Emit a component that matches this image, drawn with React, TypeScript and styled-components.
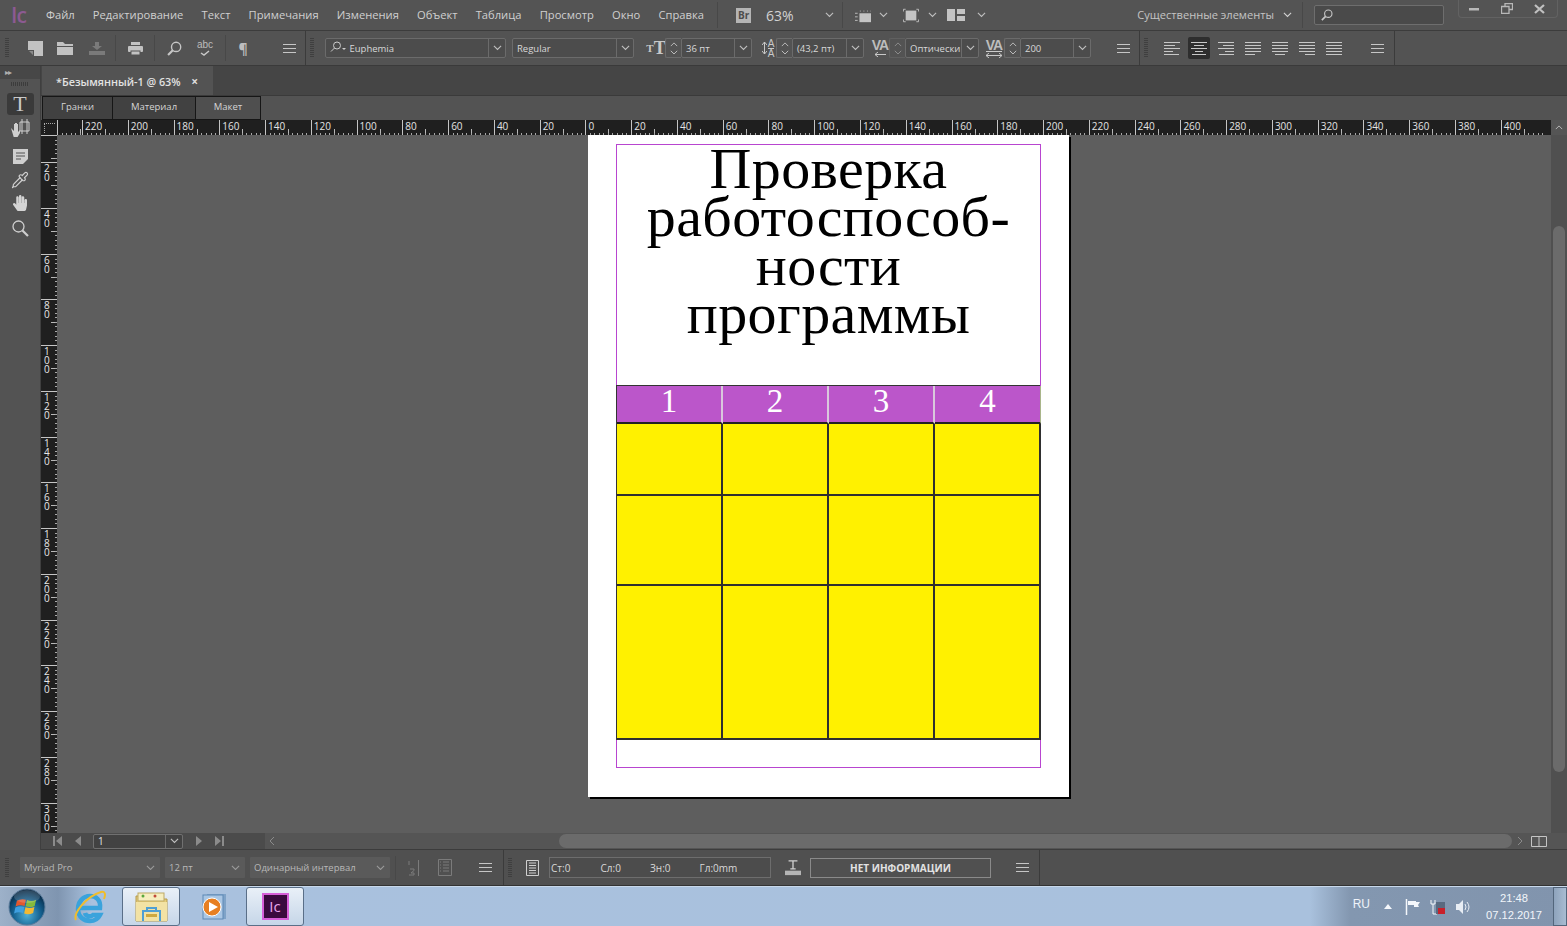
import React from "react";
import styled, { createGlobalStyle } from "styled-components";
import { FaHandPaper } from "react-icons/fa";
import { Pipette } from "lucide-react";

const UI_FONT = `"Open Sans", "Noto Sans", "Liberation Sans", sans-serif`;

const GlobalStyle = createGlobalStyle`
  html, body { margin: 0; padding: 0; background: #535353; }
  #root { width: 1567px; height: 926px; overflow: hidden; }
  * { box-sizing: border-box; }
`;

const Screen = styled.div`
  width: 1567px;
  height: 926px;
  display: flex;
  flex-direction: column;
  font-family: ${UI_FONT};
  color: #d2d2d2;
  background: #535353;
  overflow: hidden;
`;

/* ---------- menu bar ---------- */
const MenuBar = styled.div`
  height: 31px;
  display: flex;
  align-items: center;
  background: #545454;
  border-bottom: 1px solid #3c3c3c;
  flex-shrink: 0;
`;
const AppMark = styled.span`
  width: 46px;
  padding-left: 11px;
  color: #8c5a92;
  font-size: 21px;
  font-weight: 600;
  letter-spacing: -1px;
`;
const MenuItem = styled.span`
  font-size: 11.2px;
  margin: 0 18.2px 2px 0;
  white-space: nowrap;
  color: #d0d0d0;
`;
const VRule = styled.span<{ $ml?: number; $h?: number }>`
  width: 1px;
  height: ${(p) => p.$h ?? 26}px;
  background: #484848;
  margin-left: ${(p) => p.$ml ?? 0}px;
  flex-shrink: 0;
`;
const BrBadge = styled.span`
  width: 15px;
  height: 15px;
  margin-left: 18px;
  background: #b5b5b5;
  color: #4d4d4d;
  font-size: 10px;
  font-weight: 700;
  text-align: center;
  line-height: 15px;
`;
const ZoomText = styled.span`
  width: 59px;
  margin-left: 15px;
  font-size: 14px;
`;
const ChevBox = styled.span<{ $ml?: number }>`
  display: inline-flex;
  margin-left: ${(p) => p.$ml ?? 0}px;
  flex-shrink: 0;
`;
const Workspace = styled.span`
  margin: 0 0 2px auto;
  font-size: 11.1px;
  color: #c4c4c4;
  white-space: nowrap;
`;
const SearchBox = styled.div`
  width: 130px;
  height: 20px;
  margin-left: 11px;
  border: 1px solid #6e6e6e;
  border-radius: 2px;
  background: #4a4a4a;
  display: flex;
  align-items: center;
  padding-left: 6px;
`;
const WindowButtons = styled.div`
  width: 100px;
  height: 18px;
  margin: 0 9px 12px 14px;
  border: 1px solid #626262;
  border-top: 0;
  border-radius: 0 0 4px 4px;
  display: flex;
  align-items: center;
  justify-content: space-between;
  padding: 0 12px 0 10px;
`;

/* ---------- control bar ---------- */
const ControlBar = styled.div`
  height: 35px;
  display: flex;
  align-items: center;
  background: #535353;
  border-bottom: 1px solid #3a3a3a;
  flex-shrink: 0;
`;
const Grip = styled.span<{ $ml?: number; $h?: number }>`
  width: 4px;
  height: ${(p) => p.$h ?? 20}px;
  margin-left: ${(p) => p.$ml ?? 0}px;
  flex-shrink: 0;
  background: repeating-linear-gradient(180deg, #3f3f3f 0 1px, transparent 1px 2px);
`;
const Tool = styled.span<{ $ml?: number; $w?: number }>`
  width: ${(p) => p.$w ?? 16}px;
  height: 20px;
  margin-left: ${(p) => p.$ml ?? 0}px;
  display: inline-flex;
  align-items: center;
  justify-content: center;
  flex-shrink: 0;
`;
const PanelEdge = styled.span<{ $ml?: number }>`
  width: 1px;
  align-self: stretch;
  margin-left: ${(p) => p.$ml ?? 0}px;
  background: #3b3b3b;
  flex-shrink: 0;
`;
const Field = styled.div<{ $w: number; $ml?: number }>`
  width: ${(p) => p.$w}px;
  height: 20px;
  margin-left: ${(p) => p.$ml ?? 0}px;
  display: flex;
  align-items: center;
  border: 1px solid #6b6b6b;
  border-radius: 2px;
  background: #4c4c4c;
  font-size: 9.5px;
  color: #d8d8d8;
  flex-shrink: 0;
  white-space: nowrap;
  overflow: hidden;
`;
const FieldText = styled.span`
  flex: 1;
  padding-left: 4px;
  overflow: hidden;
`;
const FieldDrop = styled.span`
  width: 17px;
  height: 100%;
  border-left: 1px solid #6b6b6b;
  display: flex;
  align-items: center;
  justify-content: center;
  flex-shrink: 0;
`;
const Spinner = styled.div<{ $dim?: boolean }>`
  width: 16px;
  height: 20px;
  display: flex;
  flex-direction: column;
  align-items: center;
  justify-content: center;
  gap: 3px;
  flex-shrink: 0;
  border: 1px solid #6b6b6b;
  border-right: 0;
  border-radius: 2px 0 0 2px;
  opacity: ${(p) => (p.$dim ? 0.55 : 1)};
`;
const GlyphSerif = styled.span<{ $size: number; $weight?: number }>`
  font-family: "Liberation Serif", serif;
  font-size: ${(p) => p.$size}px;
  font-weight: ${(p) => p.$weight ?? 700};
  line-height: 1;
  color: #c8c8c8;
`;
const LeadingGlyph = styled.span`
  display: flex;
  align-items: center;
  gap: 1px;
`;
const StackGlyph = styled.span`
  display: flex;
  flex-direction: column;
  align-items: center;
  font-family: "Liberation Sans", sans-serif;
  font-size: 10px;
  line-height: 9px;
  color: #c8c8c8;
  span + span { border-top: 1px solid #c8c8c8; }
`;
const VaStack = styled.span`
  display: flex;
  flex-direction: column;
  align-items: center;
  gap: 1px;
`;
const VaGlyph = styled.span<{ $line?: boolean }>`
  font-family: "Liberation Sans", sans-serif;
  font-size: 14px;
  font-weight: 700;
  letter-spacing: -1px;
  line-height: 12px;
  color: #bdbdbd;
  border-bottom: ${(p) => (p.$line ? "1px solid #ccc" : "0")};
`;
const AlignBtn = styled.span<{ $active?: boolean; $ml?: number }>`
  width: 22px;
  height: 22px;
  margin-left: ${(p) => p.$ml ?? 0}px;
  border-radius: 2px;
  background: ${(p) => (p.$active ? "#2e2e2e" : "transparent")};
  display: flex;
  align-items: center;
  justify-content: center;
  flex-shrink: 0;
`;
const AbcText = styled.span`
  font-size: 10px;
  line-height: 10px;
  color: #bcbcbc;
  font-family: "Liberation Sans", sans-serif;
`;
const AbcStack = styled.span`
  display: flex;
  flex-direction: column;
  align-items: center;
`;
const Pilcrow = styled.span`
  font-size: 14px;
  font-weight: 700;
  color: #bdbdbd;
`;

/* ---------- document window ---------- */
const Body = styled.div`
  height: 784px;
  display: flex;
  flex-shrink: 0;
`;
const ToolPanel = styled.div`
  width: 41px;
  display: flex;
  flex-direction: column;
  align-items: center;
  background: #535353;
  border-right: 1px solid #3f3f3f;
  flex-shrink: 0;
`;
const PanelHead = styled.div`
  width: 100%;
  height: 13px;
  background: #474747;
  color: #b0b0b0;
  font-size: 8px;
  line-height: 12px;
  padding-left: 5px;
  letter-spacing: -1px;
`;
const PanelGrip = styled.div`
  width: 18px;
  height: 4px;
  margin-top: 3px;
  background: repeating-linear-gradient(90deg, #3c3c3c 0 1px, transparent 1px 2px);
`;
const ToolButton = styled.div<{ $active?: boolean; $mt?: number }>`
  width: 27px;
  height: 22px;
  margin-top: ${(p) => p.$mt ?? 0}px;
  border-radius: 3px;
  background: ${(p) => (p.$active ? "#3a3a3a" : "transparent")};
  display: flex;
  align-items: center;
  justify-content: center;
  color: #d4d4d4;
`;
const Main = styled.div`
  flex: 1;
  min-width: 0;
  display: flex;
  flex-direction: column;
`;
const TabBar = styled.div`
  height: 30px;
  background: #454545;
  border-bottom: 1px solid #3a3a3a;
  display: flex;
  align-items: flex-end;
  padding-left: 1px;
  flex-shrink: 0;
`;
const DocTab = styled.div`
  width: 171px;
  height: 29px;
  background: #535353;
  display: flex;
  align-items: center;
  justify-content: space-between;
  padding: 2px 15px 0 14px;
  font-size: 10.8px;
  font-weight: 600;
  color: #e2e2e2;
`;
const CloseX = styled.span`
  font-size: 12px;
  font-weight: 700;
  color: #ddd;
`;
const ViewBar = styled.div`
  height: 24px;
  background: #535353;
  display: flex;
  align-items: center;
  padding-left: 1px;
  flex-shrink: 0;
`;
const ViewTab = styled.div<{ $w: number; $light?: boolean }>`
  width: ${(p) => p.$w}px;
  height: 24px;
  background: ${(p) => (p.$light ? "#4f4f4f" : "#414141")};
  border: 1px solid #161616;
  margin-right: -1px;
  padding-bottom: 3px;
  display: flex;
  align-items: center;
  justify-content: center;
  font-size: 9.5px;
  color: #d4d4d4;
`;
const RulerRow = styled.div`
  height: 15px;
  display: flex;
  flex-shrink: 0;
`;
const RulerCorner = styled.div`
  width: 16px;
  background: #1f1f1f;
  flex-shrink: 0;
  padding: 3px 0 0 3px;
`;
const CornerDots = styled.div`
  width: 11px;
  height: 10px;
  border-top: 1px dotted #aaa;
  border-left: 1px dotted #aaa;
`;
const HRuler = styled.div`
  flex: 1;
  min-width: 0;
  display: flex;
  overflow: hidden;
  background: #1f1f1f;
`;
const RulerCell = styled.div<{ $w?: number }>`
  width: ${(p) => p.$w ?? 45.78}px;
  height: 15px;
  flex-shrink: 0;
  border-left: 1px solid #c4c4c4;
  padding-left: 2px;
  font-size: 10px;
  line-height: 12px;
  color: #e4e4e4;
  background:
    repeating-linear-gradient(90deg, transparent 0 3.575px, #a8a8a8 3.575px 4.575px) left bottom / 100% 2px no-repeat,
    linear-gradient(#b8b8b8, #b8b8b8) 22px bottom / 1px 6px no-repeat;
`;
const ScrollCap = styled.div`
  width: 16px;
  background: #555;
  display: flex;
  align-items: center;
  justify-content: center;
  flex-shrink: 0;
`;
const WorkArea = styled.div`
  flex: 1;
  min-height: 0;
  display: flex;
`;
const VRuler = styled.div`
  width: 16px;
  display: flex;
  flex-direction: column;
  overflow: hidden;
  background: #1f1f1f;
  flex-shrink: 0;
`;
const VRulerCell = styled.div<{ $h?: number }>`
  height: ${(p) => p.$h ?? 45.75}px;
  flex-shrink: 0;
  border-top: 1px solid #c4c4c4;
  padding: 1px 0 0 3px;
  font-size: 10px;
  line-height: 9px;
  color: #e8e8e8;
  background:
    repeating-linear-gradient(180deg, transparent 0 3.575px, #a8a8a8 3.575px 4.575px) right top / 2px 100% no-repeat,
    linear-gradient(#b8b8b8, #b8b8b8) right 22px / 6px 1px no-repeat;
`;
const VDigits = styled.span`
  display: block;
  width: 7px;
  word-break: break-all;
`;
const Canvas = styled.div`
  flex: 1;
  min-width: 0;
  background: #5e5e5e;
  padding-left: 531px;
  overflow: hidden;
`;
const VScroll = styled.div`
  width: 16px;
  background: #505050;
  display: flex;
  flex-direction: column;
  align-items: center;
  padding-top: 91px;
  flex-shrink: 0;
`;
const VThumb = styled.div`
  width: 12px;
  height: 546px;
  border-radius: 6px;
  background: #6b6b6b;
`;
const VScrollEnd = styled.div`
  margin-top: auto;
  height: 12px;
`;

/* ---------- page ---------- */
const Page = styled.div`
  width: 481px;
  height: 662px;
  background: #fff;
  padding: 9px 0 0 28px;
  box-shadow: 2px 2px 0 #000;
`;
const MarginBox = styled.div`
  width: 425px;
  height: 624px;
  border: 1px solid #b845d0;
`;
const Title = styled.h1`
  margin: 0;
  height: 240px;
  font-family: "Liberation Serif", serif;
  font-weight: 400;
  font-size: 58px;
  line-height: 48.3px;
  letter-spacing: 0.4px;
  text-align: center;
  color: #000;
`;
const TableGrid = styled.div`
  width: 424px;
  margin-left: -1px;
  border-top: 1px solid #333;
  border-left: 1px solid #333;
`;
const TableRow = styled.div<{ $h: number }>`
  height: ${(p) => p.$h}px;
  display: grid;
  grid-template-columns: repeat(4, 106px);
`;
const HeadCell = styled.div`
  background: #bb56ca;
  color: #fff;
  font-family: "Liberation Serif", serif;
  font-size: 33px;
  line-height: 30px;
  text-align: center;
  border-right: 2px solid #d9c8dc;
  border-bottom: 2px solid #222;
  &:last-child { border-right: 1px solid #a9b58a; }
`;
const BodyCell = styled.div`
  background: #fff100;
  border-right: 2px solid #2f2f2f;
  border-bottom: 2px solid #2f2f2f;
`;

/* ---------- navigation row under the page ---------- */
const NavRow = styled.div`
  height: 17px;
  display: flex;
  align-items: center;
  background: #555;
  border-bottom: 1px solid #3c3c3c;
  flex-shrink: 0;
`;
const NavGroup = styled.div`
  width: 224px;
  height: 100%;
  background: #4b4b4b;
  display: flex;
  align-items: center;
  padding-left: 12px;
  flex-shrink: 0;
`;
const PageField = styled.div`
  width: 90px;
  height: 15px;
  margin-left: 12px;
  display: flex;
  align-items: center;
  border: 1px solid #707070;
  border-radius: 2px;
  background: #424242;
  font-size: 10px;
  color: #e0e0e0;
`;
const NavGlyph = styled.span<{ $ml?: number }>`
  margin-left: ${(p) => p.$ml ?? 0}px;
  display: inline-flex;
`;
const HTrack = styled.div`
  flex: 1;
  height: 100%;
  display: flex;
  align-items: center;
  padding-left: 4px;
  min-width: 0;
`;
const HThumb = styled.div`
  width: 953px;
  height: 14px;
  margin-left: 284px;
  border-radius: 7px;
  background: #6b6b6b;
  flex-shrink: 0;
`;

/* ---------- status bar ---------- */
const StatusBar = styled.div`
  height: 36px;
  display: flex;
  align-items: center;
  background: #505050;
  border-bottom: 1px solid #333;
  flex-shrink: 0;
`;
const StatusSelect = styled.div<{ $w: number; $ml: number }>`
  width: ${(p) => p.$w}px;
  height: 21px;
  margin-left: ${(p) => p.$ml}px;
  padding: 0 5px 0 4px;
  display: flex;
  align-items: center;
  justify-content: space-between;
  background: #5a5a5a;
  font-size: 9.5px;
  color: #b8b8b8;
  border-radius: 1px;
  flex-shrink: 0;
`;
const CountBox = styled.div`
  width: 222px;
  height: 21px;
  margin-left: 9px;
  border: 1px solid #6d6d6d;
  background: #4c4c4c;
  display: flex;
  align-items: center;
  padding-left: 1px;
  font-size: 10px;
  color: #d8d8d8;
  flex-shrink: 0;
`;
const CountItem = styled.span`
  width: 49.5px;
`;
const InfoBox = styled.div`
  width: 181px;
  height: 20px;
  margin-left: 9px;
  border: 1px solid #8a8a8a;
  display: flex;
  align-items: center;
  justify-content: center;
  font-size: 10px;
  font-weight: 700;
  color: #e2e2e2;
  flex-shrink: 0;
`;

/* ---------- windows taskbar ---------- */
const Taskbar = styled.div`
  height: 40px;
  display: flex;
  align-items: center;
  border-top: 1px solid #c8d8ea;
  background: linear-gradient(90deg, #9db1c9 0, #7f95b0 58px, #a9c1de 92px, #a9c1dd 1310px, #8397b0 1350px, #8194ad 100%);
  flex-shrink: 0;
`;
const TaskSlot = styled.div<{ $active?: boolean; $ml: number; $w?: number }>`
  width: ${(p) => p.$w ?? 58}px;
  height: 39px;
  margin-left: ${(p) => p.$ml}px;
  display: flex;
  align-items: center;
  justify-content: center;
  flex-shrink: 0;
  border-radius: 3px;
  border: ${(p) => (p.$active ? "1px solid #5a6f88" : "0")};
  background: ${(p) =>
    p.$active ? "linear-gradient(180deg, #e9f0f8, #c6d6e8)" : "transparent"};
`;
const IcTile = styled.div`
  width: 27px;
  height: 27px;
  background: #3a0a3e;
  border: 2px solid #d65fd8;
  color: #e9a6ec;
  font-size: 15px;
  line-height: 22px;
  text-align: center;
`;
const Tray = styled.div`
  margin-left: auto;
  display: flex;
  align-items: center;
  height: 100%;
`;
const TrayLang = styled.span`
  font-family: "Liberation Sans", sans-serif;
  font-size: 12px;
  color: #eef3f9;
  margin-bottom: 5px;
`;
const TrayIcon = styled.span<{ $ml: number }>`
  margin-left: ${(p) => p.$ml}px;
  display: inline-flex;
`;
const Clock = styled.div`
  width: 64px;
  margin-left: 11px;
  font-family: "Liberation Sans", sans-serif;
  font-size: 11.2px;
  line-height: 17px;
  text-align: center;
  color: #f2f5fa;
`;
const ShowDesktop = styled.div`
  width: 14px;
  height: 100%;
  margin-left: 7px;
  border: 1px solid #53667c;
  background: linear-gradient(90deg, #8ea3bc, #a9bcd2);
`;

/* ---------- small drawings ---------- */
function Chev({ color = "#c0c0c0", size = 9 }: { color?: string; size?: number }) {
  return (
    <svg width={size} height={size * 0.6} viewBox="0 0 10 6">
      <path d="M1 1l4 4 4-4" fill="none" stroke={color} strokeWidth="1.2" />
    </svg>
  );
}
function Up() {
  return (
    <svg width="8" height="5" viewBox="0 0 10 6">
      <path d="M1 5l4-4 4 4" fill="none" stroke="#bbb" strokeWidth="1.2" />
    </svg>
  );
}
function Lines({ w = 13 }: { w?: number }) {
  return (
    <svg width={w} height="9" viewBox="0 0 13 9">
      <path d="M0 .5h13M0 4.5h13M0 8.5h13" stroke="#c6c6c6" />
    </svg>
  );
}
function Lens({ size = 14, color = "#c6c6c6" }: { size?: number; color?: string }) {
  return (
    <svg width={size} height={size} viewBox="0 0 14 14">
      <circle cx="8.5" cy="5.5" r="4.3" fill="none" stroke={color} strokeWidth="1.3" />
      <path d="M5.4 8.6L1 13" stroke={color} strokeWidth="2" />
    </svg>
  );
}
function ZoomGlass() {
  return (
    <svg width="17" height="17" viewBox="0 0 17 17">
      <circle cx="6.500" cy="6.500" r="5.500" fill="none" stroke="#cfcfcf" strokeWidth="1.300" />
      <path d="M10.500 10.500L16 16" stroke="#cfcfcf" strokeWidth="2.200" />
    </svg>
  );
}
function AlignIcon({ rows }: { rows: [number, number][] }) {
  return (
    <svg width="16" height="15" viewBox="0 0 16 15">
      {rows.map(([x, w], i) => (
        <rect key={i} x={x} y={i * 3 + 1} width={w} height="1" fill="#c8c8c8" />
      ))}
    </svg>
  );
}
const ALIGNS: [number, number][][] = [
  [[0, 16], [0, 11], [0, 16], [0, 9], [0, 15]],
  [[0, 16], [3, 10], [0, 16], [4, 8], [1, 14]],
  [[0, 16], [5, 11], [0, 16], [7, 9], [1, 15]],
  [[0, 16], [0, 16], [0, 16], [0, 16], [0, 10]],
  [[0, 16], [0, 16], [0, 16], [0, 16], [3, 10]],
  [[0, 16], [0, 16], [0, 16], [0, 16], [6, 10]],
  [[0, 16], [0, 16], [0, 16], [0, 16], [0, 16]],
];

function Orb() {
  return (
    <svg width="38" height="38" viewBox="0 0 38 38">
      <defs>
        <radialGradient id="orbFill" cx="50%" cy="72%" r="70%">
          <stop offset="0" stopColor="#4fb0d8" />
          <stop offset="0.55" stopColor="#14608f" />
          <stop offset="1" stopColor="#06223c" />
        </radialGradient>
      </defs>
      <circle cx="19" cy="19" r="18" fill="url(#orbFill)" stroke="#5b7c9c" />
      <g transform="translate(-5.200 -4.500) scale(1.280)">
        <path d="M11 13.500q3.500-2 7-.8l-1 4.800q-3.500-1.300-7 .4z" fill="#e2572e" />
        <path d="M19 12.900q3.500 1.500 7-.3l-1.100 4.900q-3.500 1.700-7 .3z" fill="#84b93c" />
        <path d="M9.800 18.700q3.500-1.700 7-.4l-1 4.800q-3.500-1.400-7 .3z" fill="#3f9fe0" />
        <path d="M17.700 18.600q3.500 1.300 7-.3l-1 4.800q-3.500 1.800-7 .4z" fill="#f3b933" />
      </g>
      <ellipse cx="19" cy="8.500" rx="13" ry="6.500" fill="#fff" opacity="0.16" />
    </svg>
  );
}
function IeLogo() {
  return (
    <svg width="34" height="36" viewBox="0 0 34 36">
      <path d="M6 19h21c1-8-4-12-10-12C10 7 5 13 5 20c0 8 6 12 12 12 5 0 8-2 10-6h-7c-2 2-7 2-8-2"
        fill="none" stroke="#3aa3dc" strokeWidth="4.500" />
      <path d="M3 31C0 25 12 8 28 3c4-1 5 2 3 7" fill="none" stroke="#f0bd2c" strokeWidth="2" />
    </svg>
  );
}
function FolderLogo() {
  return (
    <svg width="33" height="32" viewBox="0 0 33 32">
      <path d="M1 5h12l2 3h17v22H1z" fill="#e6cd79" stroke="#b49a4c" />
      <rect x="3" y="2" width="26" height="8" fill="#f6eebf" stroke="#bda966" />
      <circle cx="8" cy="5" r="1.500" fill="#5aa83e" />
      <circle cx="20" cy="5" r="1.500" fill="#c24a3a" />
      <rect x="1" y="11" width="31" height="19" fill="#f2e2a4" />
      <path d="M8 30V20h17v10M12 20v-3h9v3" fill="none" stroke="#4f9fd4" strokeWidth="2" />
      <rect x="11" y="23" width="11" height="3" fill="#cfa83f" />
    </svg>
  );
}
function PlayerLogo() {
  return (
    <svg width="30" height="30" viewBox="0 0 30 30">
      <rect x="9" y="2" width="19" height="25" fill="#7fa3c8" />
      <rect x="5" y="3" width="20" height="24" fill="#a9c6e4" stroke="#5e89b5" />
      <circle cx="14" cy="15" r="9" fill="#e77f22" stroke="#fff" />
      <path d="M11 10l9 5-9 5z" fill="#fff" />
    </svg>
  );
}

const H_LABELS = [
  220, 200, 180, 160, 140, 120, 100, 80, 60, 40, 20, 0, 20, 40, 60, 80, 100, 120, 140, 160, 180, 200,
  220, 240, 260, 280, 300, 320, 340, 360, 380, 400,
];
const V_LABELS = [20, 40, 60, 80, 100, 120, 140, 160, 180, 200, 220, 240, 260, 280, 300];
const MENU = ["Файл", "Редактирование", "Текст", "Примечания", "Изменения", "Объект", "Таблица", "Просмотр", "Окно", "Справка"];

export default function App() {
  return (
    <Screen>
      <GlobalStyle />
      <MenuBar>
        <AppMark>Ic</AppMark>
        {MENU.map((m) => (
          <MenuItem key={m}>{m}</MenuItem>
        ))}
        <VRule $ml={-5} />
        <BrBadge>Br</BrBadge>
        <ZoomText>63%</ZoomText>
        <Chev />
        <VRule $ml={8} />
        <Tool $ml={12} $w={16}>
          <svg width="18" height="15" viewBox="0 0 18 15">
            <rect x="5" y="5" width="13" height="10" fill="#c4c4c4" />
            <path d="M0 5h3M0 9h3M0 13h3M6 2v1M10 2v1M14 2v1M18 2v1" stroke="#c4c4c4" />
          </svg>
        </Tool>
        <ChevBox $ml={8}><Chev /></ChevBox>
        <Tool $ml={15}>
          <svg width="18" height="15" viewBox="0 0 18 15">
            <rect x="3" y="2" width="12" height="11" fill="#c4c4c4" />
            <path d="M3 .5H.5V3M15 .5h2.500V3M3 14.500H.5V12M15 14.500h2.500V12" fill="none" stroke="#c4c4c4" />
          </svg>
        </Tool>
        <ChevBox $ml={9}><Chev /></ChevBox>
        <Tool $ml={10} $w={18}>
          <svg width="18" height="12" viewBox="0 0 18 12">
            <rect x="0" y="0" width="8" height="12" fill="#c4c4c4" />
            <rect x="10" y="0" width="8" height="5" fill="#c4c4c4" />
            <rect x="10" y="7" width="8" height="5" fill="#c4c4c4" />
          </svg>
        </Tool>
        <ChevBox $ml={12}><Chev /></ChevBox>
        <Workspace>Существенные элементы</Workspace>
        <ChevBox $ml={9}><Chev color="#d4d4d4" /></ChevBox>
        <VRule $ml={10} />
        <SearchBox>
          <Lens size={12} />
        </SearchBox>
        <WindowButtons>
          <svg width="10" height="4" viewBox="0 0 10 4"><rect y="1" width="10" height="2.500" fill="#b8b8b8" /></svg>
          <svg width="12" height="11" viewBox="0 0 12 11">
            <path d="M4 3V.5h7.500v6H8M.5 3.500h7.500v7H.5z" fill="none" stroke="#b8b8b8" strokeWidth="1.300" />
          </svg>
          <svg width="11" height="10" viewBox="0 0 11 10"><path d="M1 1l9 8M10 1l-9 8" stroke="#c0c0c0" strokeWidth="2.200" /></svg>
        </WindowButtons>
      </MenuBar>

      <ControlBar>
        <Grip $ml={5} />
        <Tool $ml={18}>
          <svg width="15" height="15" viewBox="0 0 15 15"><path d="M0 0h15v15H6V9H0z" fill="#c2c2c2" /><path d="M1 10h4v4z" fill="#8a8a8a" /></svg>
        </Tool>
        <Tool $ml={14}>
          <svg width="16" height="13" viewBox="0 0 16 13"><path d="M0 0h6l2 2h8v2H0z" fill="#c2c2c2" /><rect y="5" width="16" height="8" fill="#c2c2c2" /></svg>
        </Tool>
        <Tool $ml={16}>
          <svg width="16" height="13" viewBox="0 0 16 13"><path d="M6 0h4v4h3L8 8 3 4h3z" fill="#7a7a7a" /><rect y="9" width="16" height="4" fill="#7a7a7a" /></svg>
        </Tool>
        <VRule $ml={10} />
        <Tool $ml={11}>
          <svg width="15" height="13" viewBox="0 0 15 13"><rect x="3" width="9" height="3" fill="#c2c2c2" /><rect y="4" width="15" height="6" rx="1" fill="#c2c2c2" /><rect x="3" y="9" width="9" height="4" fill="#c2c2c2" stroke="#535353" /></svg>
        </Tool>
        <VRule $ml={11} />
        <Tool $ml={11}><Lens size={15} /></Tool>
        <Tool $ml={15}>
          <AbcStack>
            <AbcText>abc</AbcText>
            <svg width="10" height="6" viewBox="0 0 10 6"><path d="M1 3l3 2 5-4" fill="none" stroke="#c8c8c8" strokeWidth="1.500" /></svg>
          </AbcStack>
        </Tool>
        <VRule $ml={12} />
        <Tool $ml={9}><Pilcrow>¶</Pilcrow></Tool>
        <Tool $ml={30}><Lines /></Tool>
        <PanelEdge $ml={8} />
        <Grip $ml={4} />
        <Field $w={181} $ml={11}>
          <FieldText>
            <svg width="17" height="11" viewBox="0 0 17 11"><circle cx="7" cy="4.500" r="3.500" fill="none" stroke="#ccc" /><path d="M4.500 7L1 10.500" stroke="#ccc" /><path d="M12 7h4l-2 2z" fill="#ccc" /></svg>
            {" "}Euphemia
          </FieldText>
          <FieldDrop><Chev /></FieldDrop>
        </Field>
        <Field $w={122} $ml={6}>
          <FieldText>Regular</FieldText>
          <FieldDrop><Chev /></FieldDrop>
        </Field>
        <Tool $ml={13} $w={18}>
          <GlyphSerif $size={11}>T</GlyphSerif>
          <GlyphSerif $size={18}>T</GlyphSerif>
        </Tool>
        <Spinner><Up /><Chev size={8} /></Spinner>
        <Field $w={71}>
          <FieldText>36 пт</FieldText>
          <FieldDrop><Chev /></FieldDrop>
        </Field>
        <Tool $ml={8}>
          <LeadingGlyph>
            <svg width="5" height="12" viewBox="0 0 5 12"><path d="M2.500 0v12M0 3l2.500-3L5 3M0 9l2.500 3L5 9" fill="none" stroke="#c8c8c8" /></svg>
            <StackGlyph><span>A</span><span>A</span></StackGlyph>
          </LeadingGlyph>
        </Tool>
        <Spinner><Up /><Chev size={8} /></Spinner>
        <Field $w={72}>
          <FieldText>(43,2 пт)</FieldText>
          <FieldDrop><Chev /></FieldDrop>
        </Field>
        <Tool $ml={7} $w={18}>
          <VaStack>
            <VaGlyph>VA</VaGlyph>
            <svg width="12" height="5" viewBox="0 0 12 5"><path d="M12 2.500H1M4 0L1 2.500 4 5" fill="none" stroke="#c8c8c8" /></svg>
          </VaStack>
        </Tool>
        <Spinner $dim><Up /><Chev size={8} /></Spinner>
        <Field $w={74}>
          <FieldText>Оптически</FieldText>
          <FieldDrop><Chev /></FieldDrop>
        </Field>
        <Tool $ml={5} $w={20}>
          <VaStack>
            <VaGlyph $line>VA</VaGlyph>
            <svg width="18" height="5" viewBox="0 0 18 5"><path d="M1 2.500h16M4 0L1 2.500 4 5M14 0l3 2.500L14 5" fill="none" stroke="#c8c8c8" /></svg>
          </VaStack>
        </Tool>
        <Spinner><Up /><Chev size={8} /></Spinner>
        <Field $w={71}>
          <FieldText>200</FieldText>
          <FieldDrop><Chev /></FieldDrop>
        </Field>
        <Tool $ml={24}><Lines /></Tool>
        <PanelEdge $ml={8} />
        <Grip $ml={4} />
        <AlignBtn $ml={13}><AlignIcon rows={ALIGNS[0]} /></AlignBtn>
        <AlignBtn $active $ml={5}><AlignIcon rows={ALIGNS[1]} /></AlignBtn>
        <AlignBtn $ml={5}><AlignIcon rows={ALIGNS[2]} /></AlignBtn>
        <AlignBtn $ml={5}><AlignIcon rows={ALIGNS[3]} /></AlignBtn>
        <AlignBtn $ml={5}><AlignIcon rows={ALIGNS[4]} /></AlignBtn>
        <AlignBtn $ml={5}><AlignIcon rows={ALIGNS[5]} /></AlignBtn>
        <AlignBtn $ml={5}><AlignIcon rows={ALIGNS[6]} /></AlignBtn>
        <Tool $ml={24}><Lines /></Tool>
        <PanelEdge $ml={9} />
      </ControlBar>

      <Body>
        <ToolPanel>
          <PanelHead>▸▸</PanelHead>
          <PanelGrip />
          <ToolButton $active $mt={7}><GlyphSerif $size={22} $weight={400}>T</GlyphSerif></ToolButton>
          <ToolButton $mt={2}>
            <svg width="20" height="18" viewBox="0 0 20 18">
              <path d="M1 9l3 3V5h1v5-6h1v6-6h1v6-5h1v8l2-2v3l-3 5H4z" fill="#cfcfcf" />
              <path d="M10 3h9v9h-9zM12 0v15M17 0v15" fill="none" stroke="#cfcfcf" />
            </svg>
          </ToolButton>
          <ToolButton $mt={6}>
            <svg width="15" height="15" viewBox="0 0 15 15">
              <path d="M0 0h15v10l-5 5H0z" fill="#cfcfcf" />
              <path d="M3 4h9M3 7h9M3 10h5" stroke="#535353" />
            </svg>
          </ToolButton>
          <ToolButton $mt={2}><Pipette size={18} strokeWidth={1.6} color="#d0d0d0" /></ToolButton>
          <ToolButton $mt={1}><FaHandPaper size={16} /></ToolButton>
          <ToolButton $mt={3}><ZoomGlass /></ToolButton>
        </ToolPanel>
        <Main>
          <TabBar>
            <DocTab>
              <span>*Безымянный-1 @ 63%</span>
              <CloseX>×</CloseX>
            </DocTab>
          </TabBar>
          <ViewBar>
            <ViewTab $w={71}>Гранки</ViewTab>
            <ViewTab $w={84}>Материал</ViewTab>
            <ViewTab $w={66} $light>Макет</ViewTab>
          </ViewBar>
          <RulerRow>
            <RulerCorner><CornerDots /></RulerCorner>
            <HRuler>
              <RulerCell $w={25} />
              {H_LABELS.map((n, i) => (
                <RulerCell key={i}>{n}</RulerCell>
              ))}
            </HRuler>
            <ScrollCap><Up /></ScrollCap>
          </RulerRow>
          <WorkArea>
            <VRuler>
              <VRulerCell $h={27} />
              {V_LABELS.map((n) => (
                <VRulerCell key={n}><VDigits>{n}</VDigits></VRulerCell>
              ))}
            </VRuler>
            <Canvas>
              <Page>
                <MarginBox>
                  <Title>
                    Проверка<br />работоспособ-<br />ности<br />программы
                  </Title>
                  <TableGrid>
                    <TableRow $h={38}>
                      <HeadCell>1</HeadCell>
                      <HeadCell>2</HeadCell>
                      <HeadCell>3</HeadCell>
                      <HeadCell>4</HeadCell>
                    </TableRow>
                    {[72, 90, 154].map((h) => (
                      <TableRow key={h} $h={h}>
                        <BodyCell />
                        <BodyCell />
                        <BodyCell />
                        <BodyCell />
                      </TableRow>
                    ))}
                  </TableGrid>
                </MarginBox>
              </Page>
            </Canvas>
            <VScroll>
              <VThumb />
              <VScrollEnd><Chev /></VScrollEnd>
            </VScroll>
          </WorkArea>
          <NavRow>
            <NavGroup>
              <NavGlyph>
                <svg width="10" height="10" viewBox="0 0 10 10"><path d="M0 0h2v10H0zM9 0v10L3 5z" fill="#8b8b8b" /></svg>
              </NavGlyph>
              <NavGlyph $ml={12}>
                <svg width="6" height="10" viewBox="0 0 6 10"><path d="M6 0v10L0 5z" fill="#8b8b8b" /></svg>
              </NavGlyph>
              <PageField>
                <FieldText>1</FieldText>
                <FieldDrop><Chev /></FieldDrop>
              </PageField>
              <NavGlyph $ml={13}>
                <svg width="6" height="10" viewBox="0 0 6 10"><path d="M0 0v10l6-5z" fill="#8b8b8b" /></svg>
              </NavGlyph>
              <NavGlyph $ml={12}>
                <svg width="10" height="10" viewBox="0 0 10 10"><path d="M1 0v10l6-5zM8 0h2v10H8z" fill="#8b8b8b" /></svg>
              </NavGlyph>
            </NavGroup>
            <HTrack>
              <svg width="6" height="10" viewBox="0 0 6 10"><path d="M5 1L1 5l4 4" fill="none" stroke="#8b8b8b" /></svg>
              <HThumb />
              <NavGlyph $ml={5}>
                <svg width="6" height="10" viewBox="0 0 6 10"><path d="M1 1l4 4-4 4" fill="none" stroke="#8b8b8b" /></svg>
              </NavGlyph>
              <NavGlyph $ml={8}>
                <svg width="16" height="11" viewBox="0 0 16 11"><path d="M.5.5h15v10H.5zM8 .5v10" fill="none" stroke="#c4c4c4" /></svg>
              </NavGlyph>
            </HTrack>
          </NavRow>
        </Main>
      </Body>

      <StatusBar>
        <Grip $ml={5} />
        <StatusSelect $w={140} $ml={11}>Myriad Pro<Chev color="#9a9a9a" /></StatusSelect>
        <StatusSelect $w={80} $ml={5}>12 пт<Chev color="#9a9a9a" /></StatusSelect>
        <StatusSelect $w={140} $ml={5}>Одинарный интервал<Chev color="#9a9a9a" /></StatusSelect>
        <VRule $ml={5} $h={24} />
        <Tool $ml={9} $w={16}>
          <svg width="12" height="16" viewBox="0 0 12 16">
            <path d="M11.500 0v16M2 5V1M2 15h5V13H4l3-2.500V9H3" fill="none" stroke="#7b7b7b" />
          </svg>
        </Tool>
        <Tool $ml={16}>
          <svg width="14" height="17" viewBox="0 0 14 17">
            <path d="M.5.5h13v16H.5zM5 3h6M5 6h6M5 9h6M5 12h6M2 3h1M2 6h1M2 9h1M2 12h1" fill="none" stroke="#7b7b7b" />
          </svg>
        </Tool>
        <Tool $ml={24}><Lines /></Tool>
        <PanelEdge $ml={10} />
        <Grip $ml={4} />
        <Tool $ml={12}>
          <svg width="13" height="16" viewBox="0 0 13 16">
            <path d="M.5.5h12v15H.5zM3 3h7M3 5.500h7M3 8h7M3 10.500h7M3 13h7" fill="none" stroke="#cfcfcf" />
          </svg>
        </Tool>
        <CountBox>
          <CountItem>Ст:0</CountItem>
          <CountItem>Сл:0</CountItem>
          <CountItem>Зн:0</CountItem>
          <CountItem>Гл:0mm</CountItem>
        </CountBox>
        <Tool $ml={14}>
          <svg width="18" height="18" viewBox="0 0 18 18">
            <path d="M4 1h10M9 1v9M6 10h6" stroke="#cfcfcf" strokeWidth="1.500" />
            <rect y="12" width="18" height="5" fill="#b5b5b5" />
          </svg>
        </Tool>
        <InfoBox>НЕТ ИНФОРМАЦИИ</InfoBox>
        <Tool $ml={23}><Lines /></Tool>
        <PanelEdge $ml={9} />
      </StatusBar>

      <Taskbar>
        <TaskSlot $ml={8} $w={38}><Orb /></TaskSlot>
        <TaskSlot $ml={15} $w={58}><IeLogo /></TaskSlot>
        <TaskSlot $active $ml={3}><FolderLogo /></TaskSlot>
        <TaskSlot $ml={4}><PlayerLogo /></TaskSlot>
        <TaskSlot $active $ml={4}><IcTile>Ic</IcTile></TaskSlot>
        <Tray>
          <TrayLang>RU</TrayLang>
          <TrayIcon $ml={14}>
            <svg width="8" height="5" viewBox="0 0 8 5"><path d="M4 0l4 5H0z" fill="#f4f7fb" /></svg>
          </TrayIcon>
          <TrayIcon $ml={13}>
            <svg width="16" height="16" viewBox="0 0 16 16">
              <path d="M1.500 0v16" stroke="#f4f7fb" strokeWidth="1.500" /><path d="M3 2h8v1h4l-2 3 1 2h-5V6H3z" fill="#f4f7fb" />
            </svg>
          </TrayIcon>
          <TrayIcon $ml={9}>
            <svg width="16" height="16" viewBox="0 0 16 16">
              <path d="M1 1v4h4V1M3 5v10h4" fill="none" stroke="#f4f7fb" /><rect x="6" y="3" width="9" height="12" fill="#596a80" /><rect x="8" y="9" width="7" height="6" fill="#c8202a" />
            </svg>
          </TrayIcon>
          <TrayIcon $ml={9}>
            <svg width="16" height="16" viewBox="0 0 16 16">
              <path d="M1 5h3l4-4v14l-4-4H1z" fill="#e8edf4" /><path d="M10 5q2 3 0 6M12 3q4 5 0 10" fill="none" stroke="#e8edf4" />
            </svg>
          </TrayIcon>
          <Clock>21:48<br />07.12.2017</Clock>
          <ShowDesktop />
        </Tray>
      </Taskbar>
    </Screen>
  );
}
